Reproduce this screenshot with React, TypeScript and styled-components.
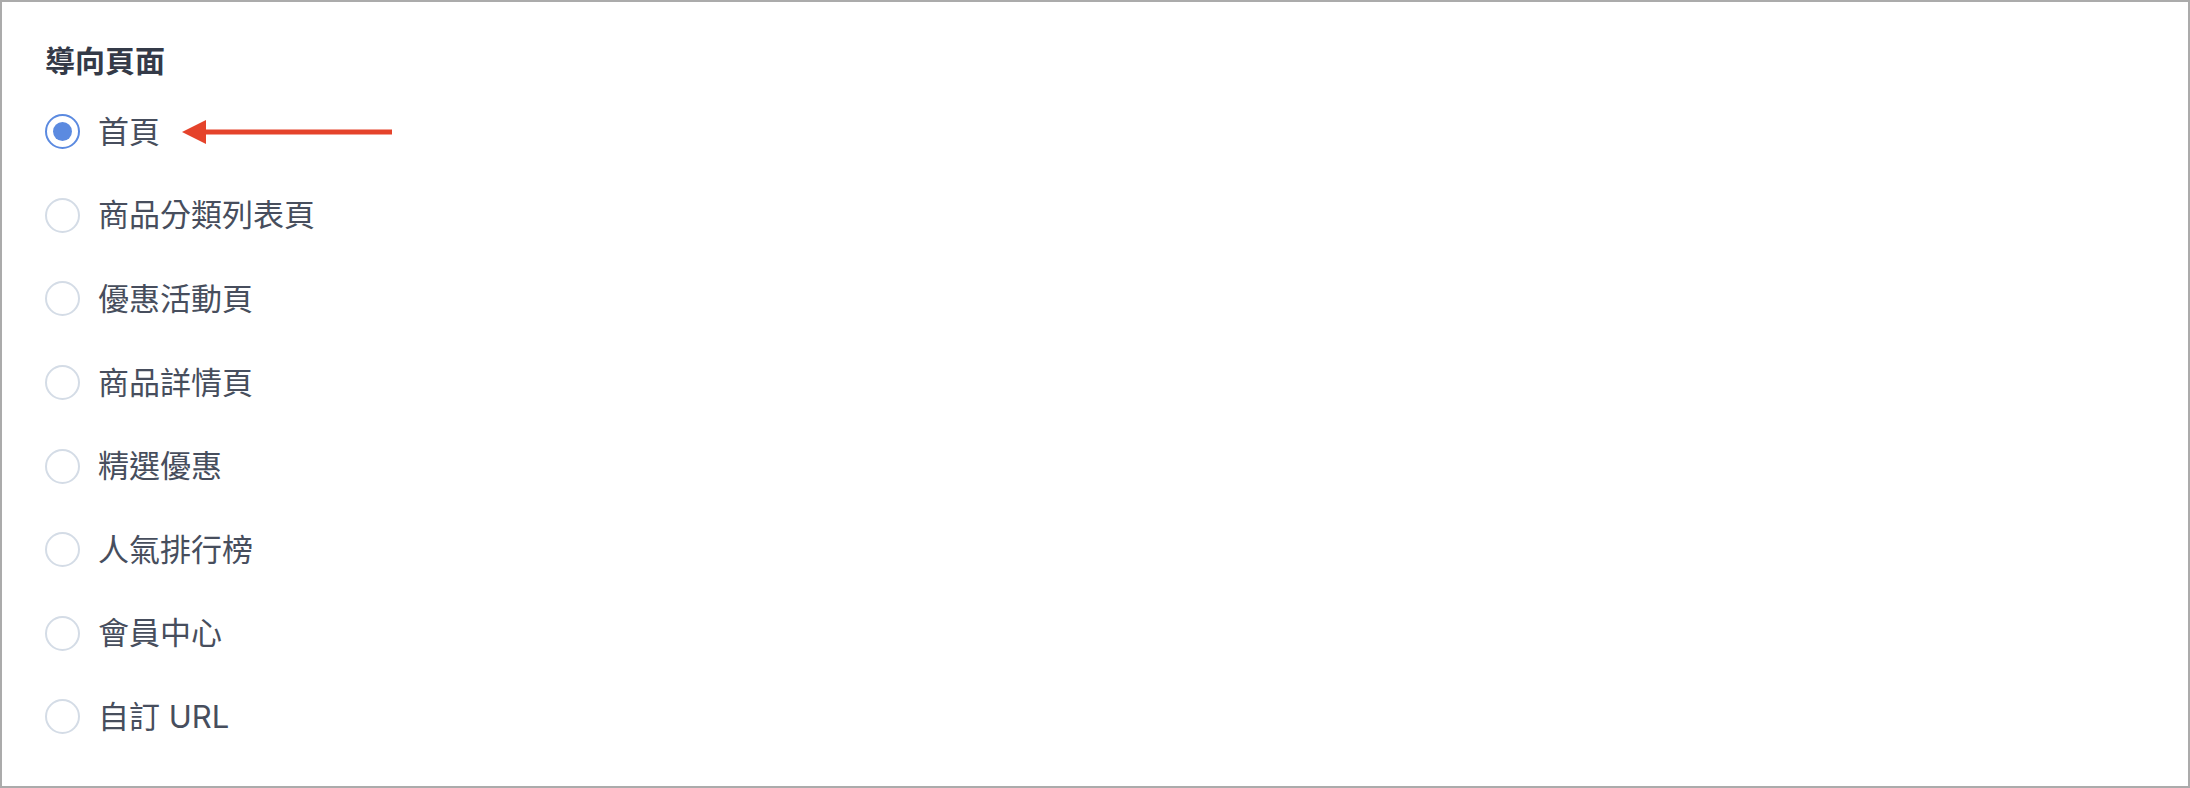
import React, { useState } from 'react';
import styled, { createGlobalStyle } from 'styled-components';

const GlobalStyle = createGlobalStyle`
  html, body {
    margin: 0;
    padding: 0;
    background: #ffffff;
  }
  * {
    box-sizing: border-box;
  }
`;

const Frame = styled.div`
  height: 788px;
  border: 2px solid #ababab;
  background: #ffffff;
  padding: 39px 43px 0;
  font-family: 'Inter', 'Noto Sans CJK TC', sans-serif;
`;

const Title = styled.div`
  font-size: 30px;
  line-height: 40px;
  font-weight: 700;
  color: #343a48;
  margin-bottom: 9px;
`;

const OptionList = styled.div`
  display: flex;
  flex-direction: column;
`;

const Row = styled.label`
  display: flex;
  align-items: center;
  height: 83.6px;
  cursor: pointer;
`;

const Radio = styled.span<{ $checked: boolean }>`
  width: 35px;
  height: 35px;
  border-radius: 50%;
  border: 2px solid ${p => (p.$checked ? '#5b8ae0' : '#d4dce6')};
  display: flex;
  align-items: center;
  justify-content: center;
  flex-shrink: 0;

  &::after {
    content: '';
    width: 19px;
    height: 19px;
    border-radius: 50%;
    background: #5b8ae0;
    display: ${p => (p.$checked ? 'block' : 'none')};
  }
`;

const Label = styled.span`
  margin-left: 18px;
  font-size: 31px;
  line-height: 40px;
  color: #474e5d;
`;

const Pointer = styled.svg`
  margin-left: 22px;
  display: block;
`;

const options = [
  '首頁',
  '商品分類列表頁',
  '優惠活動頁',
  '商品詳情頁',
  '精選優惠',
  '人氣排行榜',
  '會員中心',
  '自訂 URL',
];

const App = () => {
  const [selected, setSelected] = useState(0);

  return (
    <>
      <GlobalStyle />
      <Frame>
        <Title>導向頁面</Title>
        <OptionList>
          {options.map((opt, i) => (
            <Row key={opt} onClick={() => setSelected(i)}>
              <Radio $checked={selected === i} />
              <Label>{opt}</Label>
              {i === 0 && (
                <Pointer width="210" height="24" viewBox="0 0 210 24">
                  <polygon points="0,12 24,0 24,24" fill="#e5432b" />
                  <rect x="22" y="9.5" width="188" height="5" fill="#e5432b" />
                </Pointer>
              )}
            </Row>
          ))}
        </OptionList>
      </Frame>
    </>
  );
};

export default App;
